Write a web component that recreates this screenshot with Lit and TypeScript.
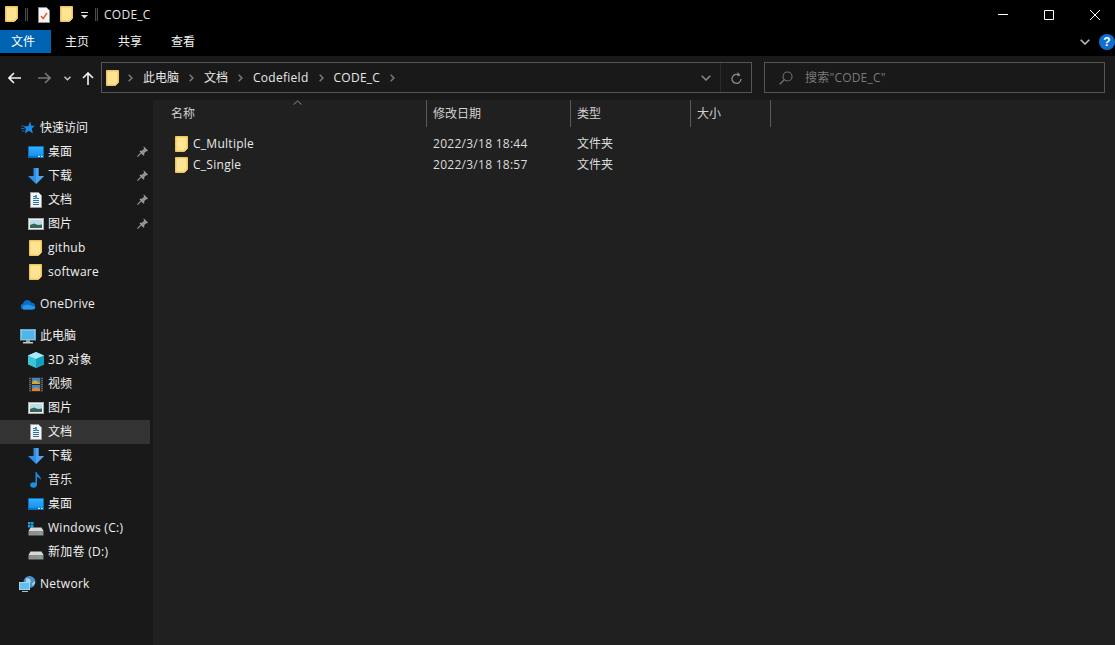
import { LitElement, html, css, svg } from "lit";
import { customElement } from "lit/decorators.js";

const folder = (cls = "") => html`<svg class="ic ${cls}" width="13" height="16" viewBox="0 0 13 16"><path d="M.5.500h12v12l-3 3H.5z" fill="#f0c65c" stroke="#efc65c"/><path d="M1.500 1.500h10v10.500H9v2.500H1.500z" fill="#fee594"/><path d="M9.500 12.500h2l-2 2z" fill="#fff0c0"/></svg>`;
const pin = html`<svg class="pin" width="11" height="11" viewBox="0 0 11 11"><path d="M6.500 0l4.500 4.500-1 .9-.8-.2-2 2 .1 1.800-.9.7L2.500 5.500l.7-.9 1.800.1 2-2-.2-.8zM3.500 6.700l.9.900L.8 11 0 10.200z" fill="#8d979c"/></svg>`;
const desktop = html`<svg class="ic" width="16" height="12" viewBox="0 0 16 12"><defs><linearGradient id="dk" x1="0" y1="0" x2="0" y2="1"><stop offset="0" stop-color="#35aefc"/><stop offset="1" stop-color="#148ff0"/></linearGradient></defs><rect width="16" height="12" rx=".5" fill="#0b6fb9"/><rect x="1" y="1" width="14" height="9.500" fill="url(#dk)"/><path d="M1 10.500h14v.5H1z" fill="#0a5d9e"/><path d="M10 10h2v1h-2zM13 10h1.500v1H13z" fill="#e8f6ff"/></svg>`;
const down = html`<svg class="ic" width="16" height="16" viewBox="0 0 16 16"><path d="M5.500 0h5v8H16l-8 8-8-8h5.500z" fill="#2f8fe6"/><path d="M8 0h2.500v8H16l-8 8z" fill="#4ba5f0"/></svg>`;
const doc = html`<svg class="ic" width="12" height="16" viewBox="0 0 12 16"><path d="M.5.500h8l3 3v12H.5z" fill="#f4f4f4" stroke="#9a9a9a"/><path d="M3 4.500h3M3 6.500h6M3 8.500h6M3 10.500h6M3 12.500h6" stroke="#2f6f9c"/><path d="M5 3h2v4H5z" fill="#2e9bdb"/></svg>`;
const pic = html`<svg class="ic" width="16" height="12" viewBox="0 0 16 12"><rect x=".5" y=".5" width="15" height="11" fill="#eee" stroke="#aaa"/><rect x="2" y="2" width="12" height="8" fill="#bcdcec"/><path d="M2 7l4-1.500 4 1.500 4-.5V10H2z" fill="#35665c"/></svg>`;
const star = html`<svg class="ic" width="14" height="14" viewBox="0 0 14 14"><path d="M9 .5l1.300 4.300h3.500l-3 2.800 1 4.900-3.800-2.700-4.200 2.700L5 8 2.500 5.200h4.800z" fill="#1a8ce8"/><path d="M0 5h3M0 7.500h3.500M1 10h2.500" stroke="#116aa8"/></svg>`;
const cloud = html`<svg class="ic" width="16" height="11" viewBox="0 0 16 11"><path d="M3.500 10.500A3 3 0 0 1 3 4.600 4.500 4.500 0 0 1 11.500 3.800 3.400 3.400 0 0 1 12.500 10.500z" fill="#0a6fc4"/><path d="M3.500 10.500a2.500 2.500 0 0 1 0-4l4-1 8 2.500a3 3 0 0 1-2.500 2.500z" fill="#2a95e8"/></svg>`;
const pc = html`<svg class="ic" width="16" height="15" viewBox="0 0 16 15"><rect x=".5" y=".5" width="15" height="10.500" fill="#9fd8f5" stroke="#6fa6c0"/><rect x="1.500" y="1.500" width="13" height="8.500" fill="#4fb4e8"/><path d="M6 11h4v2H6z" fill="#8aa"/><path d="M3 13h10v1.500H3z" fill="#c8c8c8"/></svg>`;
const cube = html`<svg class="ic" width="16" height="16" viewBox="0 0 16 16"><path d="M8 0l8 3.500v9L8 16 0 12.500v-9z" fill="#3ac4da"/><path d="M8 0l8 3.500L8 7 0 3.500z" fill="#a7ecf5"/><path d="M8 7l8-3.500v9L8 16z" fill="#13a0bd"/></svg>`;
const film = html`<svg class="ic" width="14" height="15" viewBox="0 0 14 15"><rect width="14" height="15" fill="#2e2e33"/><path d="M1 1v13M13 1v13" stroke="#9a9a9a" stroke-dasharray="1 1"/><rect x="3" y="1" width="8" height="6" fill="#3f86c4"/><rect x="3" y="8" width="8" height="6" fill="#3f86c4"/><path d="M3 5l3-2 5 3v1H3z" fill="#d8a52c"/><path d="M3 12l4-2 4 2v2H3z" fill="#d9872a"/></svg>`;
const music = html`<svg class="ic" width="12" height="16" viewBox="0 0 12 16"><ellipse cx="3.500" cy="13" rx="3.300" ry="2.700" fill="#1a8fe3"/><path d="M5.500 0h1.200c.3 3 4.800 4 4.300 8.500-.3-2-2.800-3.200-4-3.700V13H5.500z" fill="#1a8fe3"/></svg>`;
const drive = (win: boolean) => html`<svg class="ic" width="16" height="15" viewBox="0 0 16 15">${win ? svg`<path d="M0 1h2.500v2.500H0zM3 1h2.500v2.500H3zM0 4h2.500v2.500H0zM3 4h2.500v2.500H3z" fill="#19a0e8"/>` : ""}<path d="M2.500 6.500h11l2 3.500H.5z" fill="#d8d8d8"/><rect x=".5" y="10" width="15" height="4.500" rx=".5" fill="#8f8f8f"/><rect x="11" y="11.500" width="2" height="1.500" fill="#49d65a"/></svg>`;
const network = html`<svg class="ic" width="17" height="16" viewBox="0 0 17 16"><circle cx="10.500" cy="6" r="6" fill="#4b92c8"/><path d="M7 2l4 1 1 3-3 2-2-2zM13 8l2-3 1 2-2 3z" fill="#a7d3ea"/><rect x=".5" y="6.500" width="10" height="7" fill="#5dc0ee" stroke="#a9d4e8"/><path d="M3 15h6v1H3z" fill="#a9c4d2"/></svg>`;

const chev = html`<svg class="crumb" width="5" height="8" viewBox="0 0 5 8"><path d="M.7.700L4 4 .7 7.300" fill="none" stroke="#7a7a7a" stroke-width="1.500"/></svg>`;
const txt = (s: string) => html`<span class=${/[A-Za-z0-9]/.test(s) ? "lat" : ""}>${s}</span>`;

type Item = { icon: unknown; label: string; pin?: boolean; top?: boolean; sel?: boolean };
const groups: Item[][] = [
  [
    { icon: star, label: "快速访问", top: true },
    { icon: desktop, label: "桌面", pin: true },
    { icon: down, label: "下载", pin: true },
    { icon: doc, label: "文档", pin: true },
    { icon: pic, label: "图片", pin: true },
    { icon: folder(), label: "github" },
    { icon: folder(), label: "software" },
  ],
  [{ icon: cloud, label: "OneDrive", top: true }],
  [
    { icon: pc, label: "此电脑", top: true },
    { icon: cube, label: "3D 对象" },
    { icon: film, label: "视频" },
    { icon: pic, label: "图片" },
    { icon: doc, label: "文档", sel: true },
    { icon: down, label: "下载" },
    { icon: music, label: "音乐" },
    { icon: desktop, label: "桌面" },
    { icon: drive(true), label: "Windows (C:)" },
    { icon: drive(false), label: "新加卷 (D:)" },
  ],
  [{ icon: network, label: "Network", top: true }],
];

@customElement("app-root")
export class AppRoot extends LitElement {
  static styles = css`
    :host {
      display: flex;
      flex-direction: column;
      width: 1115px;
      height: 645px;
      overflow: hidden;
      background: #191919;
      color: #f0f0f0;
      font: 12px/16px "Open Sans", "Noto Sans CJK SC", sans-serif;
    }
    svg { display: block; flex: none; }
    .lat { letter-spacing: 0.27px; }
    .title { height: 30px; background: #000; display: flex; align-items: center; }
    .qa { display: flex; align-items: center; padding-left: 5px; }
    .qf { margin-top: -2px; }
    .bar { width: 1px; height: 13px; margin-left: 7px; border: 1px solid #4a4a4a; border-width: 0 1px; background: #111; margin-top: -1px; }
    .m10 { margin-left: 10px; }
    .m8 { margin-left: 8px; }
    .name { margin-left: 6px; color: #e6e6e6; }
    .caption { margin-left: auto; display: flex; }
    .cap { width: 46px; height: 30px; box-sizing: border-box; padding-left: 6px; display: flex; align-items: center; justify-content: center; }
    .tabs { height: 26px; background: #000; display: flex; padding-bottom: 3px; box-sizing: border-box; align-items: stretch; }
    .tab { width: 53px; display: flex; align-items: center; justify-content: center; color: #f2f2f2; padding-top: 1px; box-sizing: border-box; }
    .tab.file { width: 51px; background: #0063b1; margin-right: -0.5px; color: #fff; padding-right: 5px; }
    .tabs-right { margin-left: auto; display: flex; align-items: center; gap: 9px; padding-top: 1px; }
    .help { width: 16px; height: 16px; border-radius: 50%; background: #1170cf; color: #fff; font: bold 12px/16px "Liberation Sans", sans-serif; text-align: center; }
    .toolbar { height: 44px; box-sizing: border-box; display: flex; align-items: center; background: #191919; padding: 0 9px 1px 8px; }
    .nav { display: flex; align-items: center; width: 93px; flex: none; padding-top: 1px; }
    .m17 { margin-left: 17px; }
    .m13 { margin-left: 13px; }
    .m11 { margin-left: 11px; }
    .box { height: 31px; box-sizing: border-box; border: 1px solid #555; display: flex; align-items: center; color: #e8e8e8; }
    .addr { width: 651px; padding-left: 4px; }
    .addr .ic { margin-right: 9px; }
    .seg { margin: 0 10px; }
    .addr-tail { margin-left: auto; display: flex; height: 100%; }
    .ad { display: flex; align-items: center; justify-content: center; box-sizing: border-box; }
    .ad.a { width: 29px; border-right: 1px solid #2c2c2c; }
    .ad.b { width: 30px; }
    .search { width: 341px; margin-left: 12px; padding-left: 14px; color: #7a7a7a; gap: 12px; }
    .search span { letter-spacing: 0.2px; }
    .main { flex: 1; display: flex; min-height: 0; }
    .side { width: 150px; flex: none; background: #191919; padding: 16px 3px 0 0; }
    .group { margin-bottom: 8px; }
    .row { height: 24px; display: flex; align-items: center; padding-left: 27px; position: relative; color: #f0f0f0; }
    .row.top { padding-left: 19px; }
    .row.sel { background: #333; }
    .slot { width: 17px; display: flex; justify-content: center; flex: none; margin-right: 4px; }
    .pin { position: absolute; right: 2px; top: 6px; }
    .list { flex: 1; background: #202020; }
    .head { height: 27px; display: grid; grid-template-columns: 274px 144px 120px 80px; position: relative; margin-bottom: 6px; }
    .col { border-right: 1px solid #5a5a5a; padding: 0 6px; display: flex; align-items: center; color: #d0d0d0; }
    .col.first { padding-left: 18px; }
    .sort { position: absolute; left: 140px; top: 0; }
    .frow { height: 21px; display: grid; grid-template-columns: 274px 144px 120px 80px; align-items: center; color: #dcdcdc; }
    .fname { display: flex; align-items: center; padding-left: 22px; gap: 5px; color: #e8e8e8; }
    .cell { padding-left: 6px; }
  `;

  render() {
    return html`
      <div class="title">
        <div class="qa">
          ${folder("qf")}
          <span class="bar"></span>
          <svg class="ic m10" width="12" height="16" viewBox="0 0 12 16"><path d="M.5.500h8l3 3v12H.5z" fill="#f6f6f6" stroke="#8e8e8e"/><path d="M3 9l2.200 2.500L9 6" fill="none" stroke="#e8562a" stroke-width="1.400"/></svg>
          <span class="m10 qf">${folder()}</span>
          <svg class="m8" width="7" height="7" viewBox="0 0 7 7"><path d="M0 .5h7" stroke="#ddd"/><path d="M0 3h7L3.500 6.500z" fill="#ddd"/></svg>
          <span class="bar"></span>
          <span class="name lat">CODE_C</span>
        </div>
        <div class="caption">
          <div class="cap"><svg width="10" height="10" viewBox="0 0 10 10"><path d="M0 4.500h10" stroke="#fff"/></svg></div>
          <div class="cap"><svg width="10" height="10" viewBox="0 0 10 10"><path d="M.5.500h9v9h-9z" fill="none" stroke="#fff"/></svg></div>
          <div class="cap"><svg width="10" height="10" viewBox="0 0 10 10"><path d="M0 0l10 10M10 0L0 10" stroke="#fff"/></svg></div>
        </div>
      </div>
      <div class="tabs">
        <div class="tab file">文件</div>
        <div class="tab">主页</div>
        <div class="tab">共享</div>
        <div class="tab">查看</div>
        <div class="tabs-right">
          <svg width="10" height="6" viewBox="0 0 10 6"><path d="M.7.700L5 5l4.300-4.300" fill="none" stroke="#bdbdbd" stroke-width="1.600"/></svg>
          <div class="help">?</div>
        </div>
      </div>
      <div class="toolbar">
        <div class="nav">
          <svg width="13" height="12" viewBox="0 0 13 12"><path d="M6 1L1 6l5 5M1 6h12" fill="none" stroke="#f2f2f2" stroke-width="1.600"/></svg>
          <svg class="m17" width="13" height="12" viewBox="0 0 13 12"><path d="M7 1l5 5-5 5M12 6H0" fill="none" stroke="#777" stroke-width="1.600"/></svg>
          <svg class="m13" width="7" height="5" viewBox="0 0 7 5"><path d="M.5.700L3.500 3.700 6.500.700" fill="none" stroke="#ccc" stroke-width="1.400"/></svg>
          <svg class="m11" width="12" height="13" viewBox="0 0 12 13"><path d="M1 6l5-5 5 5M6 1v12" fill="none" stroke="#f2f2f2" stroke-width="1.600"/></svg>
        </div>
        <div class="box addr">
          ${folder()}
          ${chev}<span class="seg">此电脑</span>
          ${chev}<span class="seg">文档</span>
          ${chev}<span class="seg lat">Codefield</span>
          ${chev}<span class="seg lat">CODE_C</span>
          ${chev}
          <div class="addr-tail">
            <div class="ad a"><svg width="10" height="6" viewBox="0 0 10 6"><path d="M.7.700L5 5l4.300-4.300" fill="none" stroke="#8a8a8a" stroke-width="1.500"/></svg></div>
            <div class="ad b"><svg width="11" height="12" viewBox="0 0 11 12"><path d="M8.500 3.500A4.500 4.500 0 1 0 10 7" fill="none" stroke="#8a8a8a" stroke-width="1.300"/><path d="M6.500 0l3 3-3 1.500z" fill="#8a8a8a"/></svg></div>
          </div>
        </div>
        <div class="box search">
          <svg width="14" height="14" viewBox="0 0 14 14"><circle cx="8.500" cy="5.500" r="4.500" fill="none" stroke="#6e6e6e" stroke-width="1.100"/><path d="M5.300 8.700L.7 13.300" stroke="#6e6e6e" stroke-width="1.300"/></svg>
          <span>搜索"CODE_C"</span>
        </div>
      </div>
      <div class="main">
        <div class="side">
          ${groups.map(
            (g) => html`<div class="group">
              ${g.map(
                (i) => html`<div class="row ${i.top ? "top" : ""} ${i.sel ? "sel" : ""}">
                  <span class="slot">${i.icon}</span>${txt(i.label)}${i.pin ? pin : ""}
                </div>`
              )}
            </div>`
          )}
        </div>
        <div class="list">
          <div class="head">
            <div class="col first">名称</div>
            <div class="col">修改日期</div>
            <div class="col">类型</div>
            <div class="col">大小</div>
            <svg class="sort" width="9" height="5" viewBox="0 0 9 5"><path d="M.5 4.500l4-3.500 4 3.500" fill="none" stroke="#8a8a8a"/></svg>
          </div>
          ${[
            ["C_Multiple", "2022/3/18 18:44"],
            ["C_Single", "2022/3/18 18:57"],
          ].map(
            ([n, d]) => html`<div class="frow">
              <div class="fname">${folder()}${txt(n)}</div>
              <div class="cell lat">${d}</div>
              <div class="cell">文件夹</div>
            </div>`
          )}
        </div>
      </div>
    `;
  }
}
